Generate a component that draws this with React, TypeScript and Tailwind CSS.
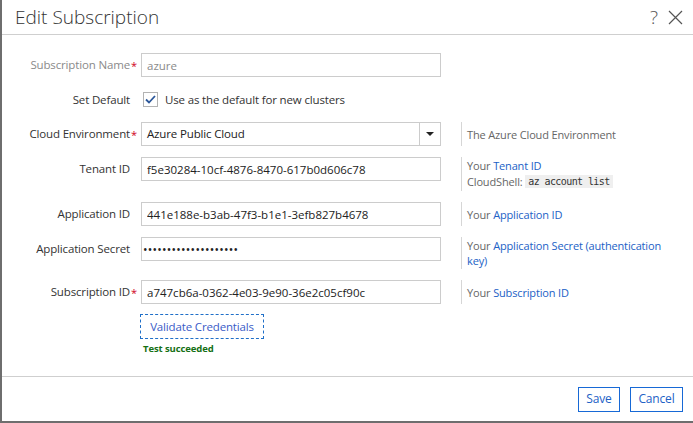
import React from 'react';

const font = "font-['Open_Sans','Noto_Sans',sans-serif]";

function Label({ text, required, muted }: { text: string; required?: boolean; muted?: boolean }) {
  return (
    <div
      className={
        'w-[139px] shrink-0 pr-[11px] text-right leading-[24px] whitespace-nowrap ' +
        (muted ? 'text-[#8a8a8a]' : 'text-[#333]')
      }
    >
      <span className="relative">
        {text}
        {required && (
          <span className="absolute left-full ml-[1px] -top-[3px] text-[#d0021b] text-[11px]">*</span>
        )}
      </span>
    </div>
  );
}

function Help({ children }: { children: React.ReactNode }) {
  return (
    <div className="ml-[20px] pl-[5px] border-l border-[#d6d6d6] min-h-[24px] py-[1px] flex flex-col justify-center leading-[15px] text-[11px] text-[#666]">
      {children}
    </div>
  );
}

function TextInput({ value, muted }: { value: string; muted?: boolean }) {
  return (
    <input
      readOnly
      value={value}
      className={
        'w-[300px] h-[24px] shrink-0 border border-[#cccccc] px-[5px] outline-none bg-white tracking-normal ' +
        (muted ? 'text-[#8a8a8a]' : 'text-[#222]')
      }
    />
  );
}

const link = 'text-[#2261c6]';

export default function App() {
  return (
    <div
      className={
        'w-[693px] h-[423px] bg-white border-l-2 border-b-2 border-[#6e6e6e] flex flex-col text-[11.5px] tracking-[-0.15px] ' +
        font
      }
    >
      <div className="h-[35px] shrink-0 border-b border-[#cfcfcf] flex items-center justify-between pl-[13px] pr-[10px] tracking-normal">
        <h1 className="text-[19px] font-light text-[#333] leading-none">Edit Subscription</h1>
        <div className="flex items-center gap-[10px] text-[#555]">
          <span className="text-[19px] font-light leading-none">?</span>
          <svg width="15" height="15" viewBox="0 0 15 15" className="stroke-[#555]">
            <path d="M1 1L14 14M14 1L1 14" strokeWidth="1.2" fill="none" />
          </svg>
        </div>
      </div>

      <div className="flex-1 pt-[18px] flex flex-col">
        <div className="flex items-start">
          <Label text="Subscription Name" required muted />
          <TextInput value="azure" muted />
        </div>

        <div className="flex items-center mt-[11px] h-[23px]">
          <Label text="Set Default" />
          <div className="flex items-center gap-[7px] pl-[2px]">
            <div className="w-[15px] h-[15px] border border-[#b3b3b3] flex items-center justify-center">
              <svg width="11" height="9" viewBox="0 0 11 9">
                <path d="M1 4.5L4 7.5L10 1" stroke="#2b579a" strokeWidth="1.8" fill="none" />
              </svg>
            </div>
            <span className="text-[#333]">Use as the default for new clusters</span>
          </div>
        </div>

        <div className="flex items-start mt-[11px]">
          <Label text="Cloud Environment" required />
          <div className="w-[300px] h-[24px] shrink-0 border border-[#cccccc] flex items-center">
            <span className="flex-1 pl-[5px] text-[#222]">Azure Public Cloud</span>
            <div className="w-[21px] h-full border-l border-[#cccccc] flex items-center justify-center">
              <svg width="8" height="4" viewBox="0 0 8 4">
                <path d="M0 0H8L4 4Z" fill="#222" />
              </svg>
            </div>
          </div>
          <Help>The Azure Cloud Environment</Help>
        </div>

        <div className="flex items-start mt-[11px]">
          <Label text="Tenant ID" />
          <TextInput value="f5e30284-10cf-4876-8470-617b0d606c78" />
          <Help>
            <div>
              Your <span className={link}>Tenant ID</span>
            </div>
            <div className="flex items-center h-[17px]">
              CloudShell:&nbsp;
              <code className="bg-[#efefef] px-[3px] text-[10px] leading-[13px] font-['DejaVu_Sans_Mono',monospace] text-[#333] tracking-[-0.6px]">
                az account list
              </code>
            </div>
          </Help>
        </div>

        <div className="flex items-start mt-[11px]">
          <Label text="Application ID" />
          <TextInput value="441e188e-b3ab-47f3-b1e1-3efb827b4678" />
          <Help>
            <div>
              Your <span className={link}>Application ID</span>
            </div>
          </Help>
        </div>

        <div className="flex items-start mt-[11px]">
          <Label text="Application Secret" />
          <input
            readOnly
            type="password"
            value="abcdefghijklmnopqrst"
            className="w-[300px] h-[24px] shrink-0 border border-[#cccccc] px-[1px] outline-none text-[#222] text-[12px] tracking-[0.25px]"
          />
          <Help>
            <div>
              Your <span className={link}>Application Secret (authentication</span>
            </div>
            <div className={link}>key)</div>
          </Help>
        </div>

        <div className="flex items-start mt-[11px]">
          <Label text="Subscription ID" required />
          <TextInput value="a747cb6a-0362-4e03-9e90-36e2c05cf90c" />
          <Help>
            <div>
              Your <span className={link}>Subscription ID</span>
            </div>
          </Help>
        </div>

        <div className="pl-[138px] mt-[10px] flex flex-col items-start">
          <button className="w-[124px] h-[25px] border border-dashed border-[#1f6fc8] text-[#3a5bc7] text-[11.5px] leading-none">
            Validate Credentials
          </button>
          <span className="mt-[3px] ml-[3px] text-[9.5px] tracking-[-0.1px] font-bold text-[#157015]">
            Test succeeded
          </span>
        </div>
      </div>

      <div className="h-[45px] shrink-0 border-t border-[#cfcfcf] flex items-center justify-end gap-[10px] pr-[10px]">
        <button className="w-[42px] h-[25px] border border-[#1769d6] text-[#2261c6] text-[12px] leading-none">
          Save
        </button>
        <button className="w-[53px] h-[25px] border border-[#1769d6] text-[#2261c6] text-[12px] leading-none">
          Cancel
        </button>
      </div>
    </div>
  );
}
